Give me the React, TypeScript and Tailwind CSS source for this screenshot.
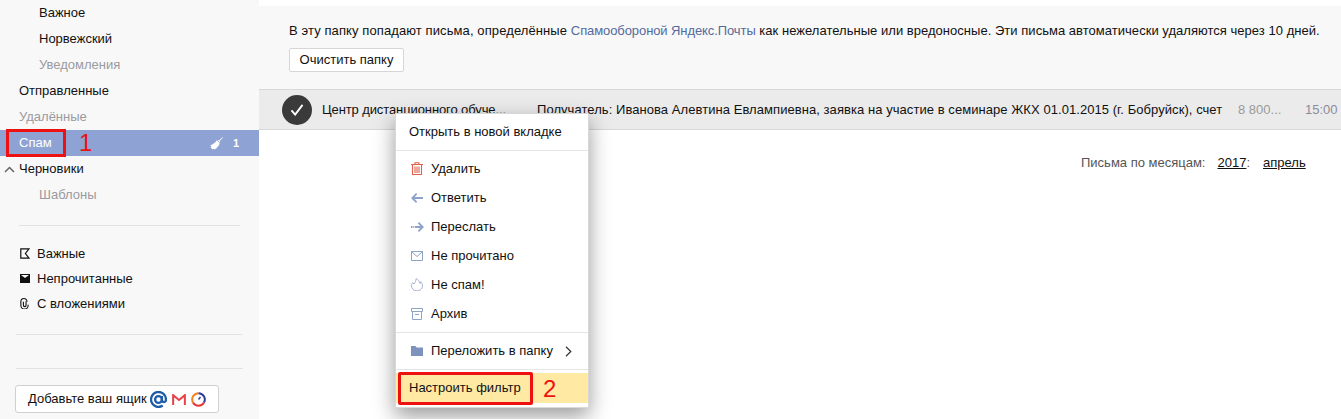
import React from "react";

const Row = ({ text, indent = "pl-[39px]", muted = false }: { text: string; indent?: string; muted?: boolean }) => (
  <div className={`h-[26px] leading-[26px] ${indent} ${muted ? "text-[#9a9a9f]" : "text-[#111]"}`}>{text}</div>
);

const Flag = () => (
  <svg width="10" height="11" viewBox="0 0 10 11" fill="none" stroke="#111" strokeWidth="1.2"><path d="M9 .8H.8v9.4H9L5.4 5.5z" /></svg>
);
const Env = () => (
  <svg width="10" height="9" viewBox="0 0 10 9"><path fill="#111" d="M0 0h10v9H0z" /><path fill="#f8f8f8" d="M1 1h8L5 4z" /></svg>
);
const Clip = () => (
  <svg width="9" height="11" viewBox="0 0 8 10" fill="none" stroke="#111" strokeWidth="1"><path d="M5.4 3v3.6a1.2 1.2 0 0 1-2.4 0V3.4" /><path d="M7.3 6.2v.6a3.3 3.3 0 0 1-6.6 0V3.3a2.8 2.8 0 0 1 5.6 0" /></svg>
);

const Item = ({ icon, text }: { icon: React.ReactNode; text: string }) => (
  <div className="h-[29px] flex items-center">
    <span className="w-[35px] pl-[15px] flex items-center">{icon}</span>
    <span>{text}</span>
  </div>
);

const Sep = ({ cls }: { cls: string }) => <div className={`h-px bg-[#e2e2e2] ${cls}`} />;

export default function App() {
  return (
    <div className="relative w-[1341px] h-[419px] overflow-hidden bg-white flex text-[13px] text-[#111] font-['Liberation_Sans',Arial,sans-serif]">
      <aside className="w-[259px] h-full shrink-0 bg-[#f8f8f8]">
        <Row text="Важное" />
        <Row text="Норвежский" />
        <Row text="Уведомления" muted />
        <Row text="Отправленные" indent="pl-[19px]" />
        <Row text="Удалённые" indent="pl-[19px]" muted />
        <div className="h-[26px] bg-[#8ea3d4] text-white flex items-center pl-[19px]">
          <span className="flex-1">Спам</span>
          <svg className="mr-[10px]" width="13" height="13" viewBox="0 0 13 13" fill="white">
            <path d="M9.3 3.2 12.4.2l.5.5-3 3.1.2 1.6L7.6 2.9z" />
            <path d="M6.9 3.2 9.7 6C9.2 8.6 7 11.4 4.3 12.6L3.4 11.6 2.6 12.5.3 9.9 1.8 9.5.2 8.4C3 7.4 5.4 5.6 6.9 3.2z" />
          </svg>
          <span className="w-[26px] text-[11px] font-bold">1</span>
        </div>
        <div className="relative">
          <svg className="absolute left-[4px] top-[10px]" width="11" height="7" viewBox="0 0 11 7" fill="none" stroke="#666" strokeWidth="1.5"><path d="M1 6 5.5 1.5 10 6" /></svg>
          <Row text="Черновики" indent="pl-[19px]" />
        </div>
        <Row text="Шаблоны" muted />
        <Sep cls="mt-[17px] ml-[19px] mr-[19px]" />
        <div className="mt-[15px]">
          {[
            [<Flag key="f" />, "Важные"],
            [<Env key="e" />, "Непрочитанные"],
            [<Clip key="c" />, "С вложениями"],
          ].map(([icon, t], i) => (
            <div key={i} className="h-[25px] flex items-center pl-[20px]">
              <span className="w-[17px] flex items-center">{icon}</span>
              <span>{t}</span>
            </div>
          ))}
        </div>
        <Sep cls="mt-[18px] ml-[16px] mr-[17px]" />
        <Sep cls="mt-[33px] ml-[16px] mr-[16px]" />
        <button className="mt-[16px] ml-[15px] w-[204px] h-[28px] bg-white border border-[#d0d0d0] rounded-[3px] flex items-center pl-[12px] text-[13px] text-[#111]">
          <span>Добавьте ваш ящик</span>
          <svg className="ml-[3px]" width="17" height="17" viewBox="0 0 16 16" fill="none" stroke="#1f5ca8" strokeWidth="2.2"><circle cx="8" cy="8" r="3.2" /><path d="M11.2 4.8V9a2 2 0 0 0 3.8 0V8a7 7 0 1 0-3 5.7" /></svg>
          <svg className="ml-[5px]" width="14" height="11" viewBox="0 0 15 12" fill="none" stroke="#e8424a" strokeWidth="2.2"><path d="M1.1 12V1.2L7.5 6.5 13.9 1.2V12" /></svg>
          <svg className="ml-[5px]" width="15" height="15" viewBox="0 0 15 15" fill="none" strokeWidth="2">
            <path stroke="#f5821f" d="M2 10.5A6.3 6.3 0 0 1 7.5 1.2" />
            <path stroke="#2b3a9b" d="M7.5 1.2a6.3 6.3 0 0 1 5.5 9.3" />
            <path stroke="#e53935" d="M13 10.5a6.3 6.3 0 0 1-11 0" />
            <path stroke="#2b3a9b" strokeWidth="1.4" d="M7.5 7.5 9.5 5" />
          </svg>
        </button>
      </aside>

      <main className="flex-1 min-w-0 pt-[6px]">
        <div className="h-[83px] bg-[#f8f8f8] pl-[30px] pt-[17px]">
          <p className="leading-[15px] whitespace-nowrap tracking-[0.03px]">
            <span className="tracking-[0.1px]">В эту папку попадают письма, определённые </span><span className="text-[#556a9c] tracking-[-0.09px]">Спамообороной Яндекс.Почты</span> как нежелательные или вредоносные. Эти письма автоматически удаляются через 10 дней.
          </p>
          <button className="mt-[10px] h-[24px] w-[115px] bg-white border border-[#d6d6d6] rounded-[2px] text-[13px] text-[#111]">Очистить папку</button>
        </div>
        <div className="h-[41px] bg-[#ebebeb] border-y border-[#d8d8d8] flex items-center whitespace-nowrap">
          <div className="ml-[23px] mt-px w-[30px] h-[30px] rounded-full bg-[#3a3a3a] flex items-center justify-center shrink-0">
            <svg width="14" height="12" viewBox="0 0 15 13" fill="none" stroke="white" strokeWidth="2"><path d="M1.5 7 5.5 11.5 13.5 1" /></svg>
          </div>
          <span className="ml-[10px] w-[215px] shrink-0 tracking-[-0.1px]">Центр дистанционного обуче...</span>
          <span className="w-[701px] shrink-0 tracking-[0.06px]">Получатель: Иванова Алевтина Евлампиевна, заявка на участие в семинаре ЖКХ 01.01.2015 (г. Бобруйск), счет</span>
          <span className="text-[#9a9a9a] w-[67px] shrink-0">8 800...</span>
          <span className="text-[#8b8b9a]">15:00</span>
        </div>
        <div className="flex mt-[25px] pl-[822px] h-[16px] items-center whitespace-nowrap">
          <span className="text-[#555]">Письма по месяцам:</span>
          <span className="ml-[12px] underline">2017</span>
          <span className="text-[#555]">:</span>
          <span className="ml-[13px] underline">апрель</span>
        </div>
      </main>

      {/* context menu */}
      <div className="absolute left-[395px] top-[113px] w-[194px] h-[295px] bg-white border border-[#d8d8d8] shadow-[0_8px_20px_rgba(0,0,0,0.4)]">
        <div className="h-[36px] flex items-center pl-[13px]">Открыть в новой вкладке</div>
        <div className="h-px bg-[#e5e5e5]" />
        <div className="pt-[3px]">
          <Item text="Удалить" icon={
            <svg width="12" height="13" viewBox="0 0 12 13" fill="none" stroke="#e4604a" strokeWidth="1.1"><path d="M0 2.5h12M4 2.5V.8h4v1.7M1.5 2.5v10h9v-10M4 4.5v6.5M6 4.5v6.5M8 4.5v6.5" /></svg>
          } />
          <Item text="Ответить" icon={
            <svg width="12" height="10" viewBox="0 0 12 10" fill="#8ea3c8"><path d="M5 0 6.2 1.2 3.8 4H12v2H3.8L6.2 8.8 5 10 0 5z" /></svg>
          } />
          <Item text="Переслать" icon={
            <svg width="13" height="10" viewBox="0 0 13 10" fill="#8ea3c8"><path d="M8 0 6.8 1.2 9.2 4H4v2h5.2L6.8 8.8 8 10l5-5zM0 4h1.5v2H0zM2.3 4h1v2h-1z" /></svg>
          } />
          <Item text="Не прочитано" icon={
            <svg width="12" height="10" viewBox="0 0 12 10" fill="none" stroke="#8ea3c8"><path d="M.5.5h11v9H.5zM.5.5 6 5.5 11.5.5" /></svg>
          } />
          <Item text="Не спам!" icon={
            <svg width="12" height="13" viewBox="0 0 12 13" fill="none" stroke="#a8b4cf"><path d="M3 6 1.5 4.5C.6 6 .5 7 .5 8a5.3 4.7 0 0 0 11 0c0-2-.8-3.3-1.6-4.2L9 5.5C8.6 3 7 1.5 5 .6c.3 2-.9 3.8-2 5.4z" /></svg>
          } />
          <Item text="Архив" icon={
            <svg width="12" height="12" viewBox="0 0 12 12" fill="none" stroke="#8ea3c8"><path d="M.5.5h11v3H.5zM1.5 3.5v8h9v-8M4 6.5h4" /></svg>
          } />
        </div>
        <div className="h-px bg-[#e5e5e5] mt-[4px]" />
        <div className="h-[36px] flex items-center relative">
          <span className="w-[35px] pl-[15px] flex items-center">
            <svg width="12" height="10" viewBox="0 0 12 10" fill="#7d92bd"><path d="M0 0h4.5l1 1.5H12V10H0z" /></svg>
          </span>
          <span>Переложить в папку</span>
          <svg className="ml-[12px]" width="7" height="11" viewBox="0 0 7 11" fill="none" stroke="#333" strokeWidth="1.2"><path d="M1 .8 5.8 5.5 1 10.2" /></svg>
        </div>
        <div className="h-px bg-[#e5e5e5]" />
        <div className="mt-[3px] h-[30px] bg-[#ffe9a3] flex items-center pl-[13px] pb-px">Настроить фильтр</div>
      </div>

      {/* annotations */}
      <div className="absolute left-[6px] top-[129px] w-[60px] h-[28px] border-[3px] border-[#ee1111]" />
      <span className="absolute left-[79px] top-[130px] text-[24px] leading-[26px] text-[#ee1111]">1</span>
      <div className="absolute left-[398px] top-[372px] w-[135px] h-[33px] border-[3px] border-[#ee1111] rounded-[2px]" />
      <span className="absolute left-[543px] top-[375px] text-[24px] leading-[27px] text-[#ee1111]">2</span>
    </div>
  );
}
